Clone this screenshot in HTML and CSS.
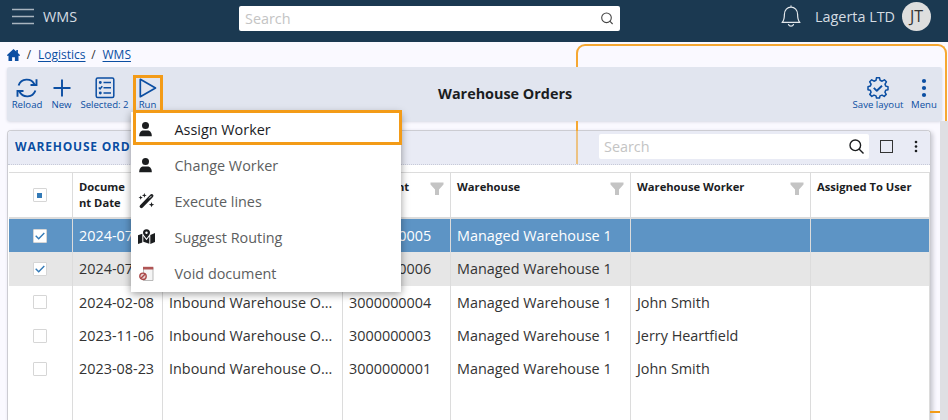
FILE: index.html
```html
<!DOCTYPE html>
<html lang="en">
<head>
<meta charset="utf-8">
<title>Warehouse Orders</title>
<link rel="stylesheet" href="styles.css">
</head>
<body>
<header class="topbar">
  <svg class="burger" width="22" height="18" viewBox="0 0 22 18"><path d="M0 1.500h22M0 8.500h22M0 15.500h22" stroke="#a9b5bf" stroke-width="1.400"/></svg>
  <span class="brand">WMS</span>
  <div class="top-search"><span>Search</span>
    <svg width="14" height="14" viewBox="0 0 14 14" fill="none" stroke="#444" stroke-width="1.100"><circle cx="6.500" cy="5.800" r="4.800"/><path d="M9.800 9.200l2.800 2.800"/></svg>
  </div>
  <svg class="bell" width="20" height="22" viewBox="0 0 20 22" fill="none" stroke="#e3e8ec" stroke-width="1.200" stroke-linejoin="round" stroke-linecap="round"><path d="M10 .8v1.400M1 17.300h18M1.200 17.300C3 15.500 3.400 13.500 3.400 9.500C3.400 5 6.300 2.200 10 2.200S16.600 5 16.600 9.500C16.600 13.500 17 15.500 18.800 17.300M7.500 19.500c.5 1.300 1.400 1.700 2.500 1.700s2-.4 2.500-1.700"/></svg>
  <span class="user">Lagerta LTD</span>
  <span class="avatar">JT</span>
</header>
<nav class="crumbs">
  <svg width="13" height="12" viewBox="0 0 13 12" fill="#0b4ea2"><path d="M6.500 0L9.300 2.500V1h1.600v3L13 6v.8h-1.500V12H7.900V8.300H5.100V12H1.500V6.800H0V6z"/></svg>
  <span class="sep">/</span><a>Logistics</a><span class="sep">/</span><a>WMS</a>
</nav>
<main class="page">
  <section class="toolbar">
    <div class="tool reload"><svg width="22" height="20" viewBox="0 0 22 20" fill="none" stroke="#0b4ea2" stroke-width="1.900"><path d="M2.600 7.500A8.600 8.600 0 0 1 18.500 6.500M20.500 1.200V7h-6M19.400 12.500A8.600 8.600 0 0 1 3.500 13.500M1.500 18.800V13h6"/></svg><span>Reload</span></div>
    <div class="tool new"><svg width="20" height="20" viewBox="0 0 20 20" stroke="#0b4ea2" stroke-width="1.900"><path d="M10 1.500v17M1.500 10h17"/></svg><span>New</span></div>
    <div class="tool selected"><svg width="20" height="22" viewBox="0 0 20 22" fill="none" stroke="#0b4ea2" stroke-width="1.500"><rect x="1.200" y="1" width="17.600" height="19.500" rx="1.500"/><path d="M8.500 5.500H16M8.500 10.800H16M8.500 16H16M3.800 10.500l1.300 1.300L7.300 9.300"/><circle cx="5.300" cy="5.500" r=".7"/><circle cx="5.300" cy="16" r=".7"/></svg><span>Selected: 2</span></div>
    <div class="tool run"><svg width="18" height="20" viewBox="0 0 18 20" fill="none" stroke="#0b4ea2" stroke-width="1.700" stroke-linejoin="round"><path d="M1.300 1.300v17.400L16.500 10z"/></svg><span>Run</span></div>
    <h1>Warehouse Orders</h1>
    <div class="tool save"><svg width="22" height="22" viewBox="0 0 22 22" fill="none" stroke="#0b4ea2" stroke-width="1.500" stroke-linejoin="round"><path d="M9.500 1h3l.6 2.600 2 .9 2.300-1.400 2 2-1.400 2.300.8 2L21 10v3l-2.300.5-.8 2 1.300 2.200-2 2-2.200-1.300-2 .8-.5 2.100h-3L9 19.200l-2-.8-2.200 1.300-2-2 1.300-2.200-.8-2L1 13v-3l2.300-.6.8-2-1.400-2.300 2-2L7 4.500l2-.9z" transform="translate(0 -.3)"/><path d="M6.800 10.800l3 3 5.200-5" stroke-width="1.900"/></svg><span>Save layout</span></div>
    <div class="tool menu-btn"><svg width="6" height="20" viewBox="0 0 6 20" fill="#0b4ea2"><circle cx="3" cy="3" r="2.100"/><circle cx="3" cy="10" r="2.100"/><circle cx="3" cy="17" r="2.100"/></svg><span>Menu</span></div>
  </section>
  <section class="panel">
    <div class="panel-head">
      <h2>WAREHOUSE ORD</h2>
      <div class="panel-search"><span>Search</span>
        <svg width="15" height="15" viewBox="0 0 15 15" fill="none" stroke="#1b1d1f" stroke-width="1.400"><circle cx="6.300" cy="6.300" r="5.300"/><path d="M10 10l4.500 4.500"/></svg></div>
      <i class="square"></i>
      <svg class="dots" width="4" height="13" viewBox="0 0 4 13" fill="#1b1d1f"><circle cx="2" cy="2" r="1.300"/><circle cx="2" cy="6.500" r="1.300"/><circle cx="2" cy="11" r="1.300"/></svg>
    </div>
    <div class="grid">
      <div class="row head"><div><i class="check partial"></i></div><div>Docume<br>nt Date</div><div></div><div class="doc-no"><span>Document</span><svg width="14" height="14" viewBox="0 0 14 14" fill="#c4c4c4"><path d="M.5.5h13v2L9 7.500v5.500H5V7.500L.5 2.500z"/></svg></div><div>Warehouse<svg width="14" height="14" viewBox="0 0 14 14" fill="#c4c4c4"><path d="M.5.5h13v2L9 7.500v5.500H5V7.500L.5 2.500z"/></svg></div><div>Warehouse Worker<svg width="14" height="14" viewBox="0 0 14 14" fill="#c4c4c4"><path d="M.5.5h13v2L9 7.500v5.500H5V7.500L.5 2.500z"/></svg></div><div>Assigned To User</div></div>
      <div class="row active"><div><i class="check"><svg width="10" height="8" viewBox="0 0 10 8"><path d="M.7 3.700l3 3L9.300 1"/></svg></i></div><div>2024-07</div><div></div><div>3000000005</div><div>Managed Warehouse 1</div><div></div><div></div></div>
      <div class="row chosen"><div><i class="check"><svg width="10" height="8" viewBox="0 0 10 8"><path d="M.7 3.700l3 3L9.300 1"/></svg></i></div><div>2024-07</div><div></div><div>3000000006</div><div>Managed Warehouse 1</div><div></div><div></div></div>
      <div class="row"><div><i class="check"></i></div><div>2024-02-08</div><div>Inbound Warehouse O...</div><div>3000000004</div><div>Managed Warehouse 1</div><div>John Smith</div><div></div></div>
      <div class="row"><div><i class="check"></i></div><div>2023-11-06</div><div>Inbound Warehouse O...</div><div>3000000003</div><div>Managed Warehouse 1</div><div>Jerry Heartfield</div><div></div></div>
      <div class="row"><div><i class="check"></i></div><div>2023-08-23</div><div>Inbound Warehouse O...</div><div>3000000001</div><div>Managed Warehouse 1</div><div>John Smith</div><div></div></div>
      <div class="row filler"><div></div><div></div><div></div><div></div><div></div><div></div><div></div></div>
    </div>
  </section>
</main>
<div class="scrollbar"></div>
<div class="guide"></div><div class="guide-low"></div><div class="guide-end"></div>
<ul class="menu">
  <li class="current"><svg width="16" height="16" viewBox="0 0 16 16"><circle cx="7" cy="4.500" r="3.500"/><path d="M.7 15.200c0-4 2-5.700 4.300-5.700h4c2.300 0 4.300 1.700 4.300 5.700z"/></svg>Assign Worker</li>
  <li><svg width="16" height="16" viewBox="0 0 16 16"><circle cx="7" cy="4.500" r="3.500"/><path d="M.7 15.200c0-4 2-5.700 4.300-5.700h4c2.300 0 4.300 1.700 4.300 5.700z"/></svg>Change Worker</li>
  <li><svg width="16" height="16" viewBox="0 0 16 16"><path d="M1.600 12.200L12 1.400q1.200-1 2.400.1t.1 2.400L4 14.700q-1.200.9-2.400-.1t0-2.400zM5.800 0l.7 1.700 1.700.7-1.700.6-.7 1.800-.6-1.800-1.800-.6 1.800-.7zM2.200 2.500l.6 1.500 1.500.6-1.500.6-.6 1.500-.6-1.500L0 4.600 1.600 4zM13 9l.8 1.900 1.900.7-1.900.8-.8 1.900-.7-1.900-1.900-.8 1.900-.7z"/><path d="M10.600 5.300L13 2.900" stroke="#fff" stroke-width=".9"/></svg>Execute lines</li>
  <li><svg width="17" height="16" viewBox="0 0 17 16"><path d="M0 6.300l4.300-1.500v8.700L0 15zM12.300 6L17 4v9l-4.700 2zM5.300 7l3.200 4.300L11.300 7.500v7.200l-6-1.900z"/><path d="M8.500 9.500C6.500 7 5 5.200 5 3.700a3.500 3.500 0 0 1 7 0c0 1.500-1.500 3.300-3.500 5.800z"/><circle cx="8.500" cy="3.700" r="1.200" fill="#fff"/></svg>Suggest Routing</li>
  <li><svg width="16" height="16" viewBox="0 0 16 16"><path d="M5 2.500h9.500v13H5z" fill="#f5f5f5" stroke="#aaa" stroke-width=".8"/><path d="M4.500 1.800h10.300v2.700H4.500z" fill="#b05555"/><circle cx="4.500" cy="11.300" r="3.200" fill="#ead0d0" stroke="#a94747" stroke-width="1.400"/><path d="M2.300 13.500l4.400-4.400" stroke="#a94747" stroke-width="1.400"/></svg>Void document</li>
</ul>
<div class="mark mark-run"></div><div class="mark mark-item"></div>
</body>
</html>
```
FILE: styles.css
```css
* { box-sizing: border-box; }
html { height: 420px; overflow: hidden; }
body { margin: 0; width: 948px; height: 420px; overflow: hidden; position: relative; background: #faf9ff; color: #333; font-family: "Open Sans", sans-serif; font-size: 14.400px; }
svg { display: block; flex: none; }
.topbar { height: 42px; background: #1b3951; display: flex; align-items: flex-start; padding: 0 16px 0 12px; color: #d5dce2; }
.burger { margin-top: 8px; }
.brand { margin-left: 9px; width: 196px; line-height: 33px; }
.top-search { width: 381px; height: 25px; margin-top: 6px; background: #fff; border-radius: 2px; display: flex; align-items: center; justify-content: space-between; padding: 0 6px; color: #c4c4c4; }
.bell { margin: 5px 0 0 161px; }
.user { margin-left: 14px; width: 87px; line-height: 33px; white-space: nowrap; }
.avatar { width: 29px; height: 29px; margin-top: 2px; border-radius: 50%; background: #dedede; color: #333; text-align: center; line-height: 29px; font-size: 16px; }
.crumbs { height: 25px; display: flex; align-items: center; padding-left: 7px; font-size: 12px; }
.crumbs a { color: #0b4ea2; text-decoration: underline; text-underline-offset: 2px; margin-right: -1px; }
.crumbs .sep { width: 18px; text-align: center; }
.page { width: 948px; height: 353px; padding-left: 7px; overflow: hidden; }
.toolbar { width: 935px; height: 54px; background: #e1e5ef; border-radius: 3px; display: flex; align-items: flex-start; box-shadow: 0 1px 3px #d6d8e3; }
.tool { height: 54px; padding-top: 10px; display: flex; flex-direction: column; align-items: center; color: #0b4ea2; font-size: 9.600px; white-space: nowrap; }
.tool svg { height: 22px; }
.tool span { line-height: 12px; }
.reload { width: 40px; } .new { width: 29px; } .selected { width: 57px; } .run { width: 29px; }
.toolbar h1 { margin: 0; width: 685px; padding-left: 276px; line-height: 53px; font-size: 14.400px; color: #1b1d1f; white-space: nowrap; }
.save { width: 62px; } .menu-btn { width: 30px; }
.panel { width: 924px; height: 300px; margin-top: 9px; border: 1px solid #ccccd2; border-bottom: 0; border-radius: 4px 4px 0 0; background: #fff; box-shadow: 2px 2px 4px #c9c9d2; }
.panel-head { height: 34px; padding-bottom: 2px; background: #e9ebf5; border-bottom: 1px dotted #c7cad8; border-radius: 4px 4px 0 0; display: flex; align-items: center; }
.panel h2 { margin: 0 0 0 7px; width: 584px; font-size: 12px; line-height: 16px; letter-spacing: .8px; color: #0b4ea2; text-shadow: 0 0 3px #fff; }
.panel-search { width: 270px; height: 25px; background: #fff; border-radius: 2px; display: flex; align-items: center; justify-content: space-between; padding: 0 5px; color: #c4c4c4; }
.square { width: 13px; height: 13px; border: 1px solid #333; margin-left: 11px; }
.dots { margin-left: 21px; }
.grid { margin-top: 7px; }
.row { display: grid; grid-template-columns: 64px 90px 180px 108px 180px 180px 119px; height: 33.300px; margin-left: 1px; }
.row > div { border-right: 1px solid #dcdcdc; padding-left: 6px; line-height: 33px; white-space: nowrap; overflow: hidden; }
.row > div:first-child { padding: 0 2px 0 0; display: flex; align-items: center; justify-content: center; }
.row.head { height: 47px; border-top: 1px solid #dcdcdc; border-bottom: 2px solid #dcdcdc; }
.head > div { display: flex; justify-content: space-between; padding-right: 6px; padding-top: 6px; font-size: 11.200px; font-weight: 700; line-height: 16px; color: #1b1d1f; }
.doc-no span { margin-left: 2px; }
.head svg { margin-top: 3px; }
.active { background: #5d94c5; color: #fff; }
.chosen { background: #e6e6e6; }
.filler { height: 80px; }
.check { width: 14px; height: 14px; border: 1px solid #d6d6d6; border-radius: 1px; background: #fff; display: flex; align-items: center; justify-content: center; }
.check path { fill: none; stroke: #337ab7; stroke-width: 1.400; }
.partial::after { content: ""; width: 5px; height: 5px; background: #337ab7; }
.scrollbar { position: absolute; left: 940px; top: 121px; width: 8px; height: 299px; background: #dfdfe3; }
.guide { position: absolute; left: 576px; top: 44px; width: 371px; height: 77px; border: 2px solid #f6a832; border-bottom: 0; border-radius: 9px 9px 0 0; clip-path: polygon(0 0, 100% 0, 100% 100%, 367px 100%, 367px 23px, 0 23px); }
.guide-low { position: absolute; left: 576px; top: 121px; width: 2px; height: 43px; background: linear-gradient(#f6a832 0 10px, #ecc283 10px); }
.guide-end { position: absolute; left: 930px; top: 411px; width: 10px; height: 2px; background: #f39b17; }
.menu { list-style: none; margin: 0; padding: 0; position: absolute; left: 131px; top: 112px; width: 270px; height: 180px; background: #fff; box-shadow: 0 2px 8px #0006; color: #5c5e60; }
.menu li { height: 36px; display: flex; align-items: center; padding: 0 0 2px 7px; gap: 19.500px; }
.menu svg { width: 17px; fill: #1b1d1f; }
.menu .current { color: #1b1d1f; }
.mark { position: absolute; border: 3px solid #f39b17; }
.mark-run { left: 133px; top: 75px; width: 30px; height: 38px; }
.mark-item { left: 133px; top: 110px; width: 269px; height: 35px; }
```
